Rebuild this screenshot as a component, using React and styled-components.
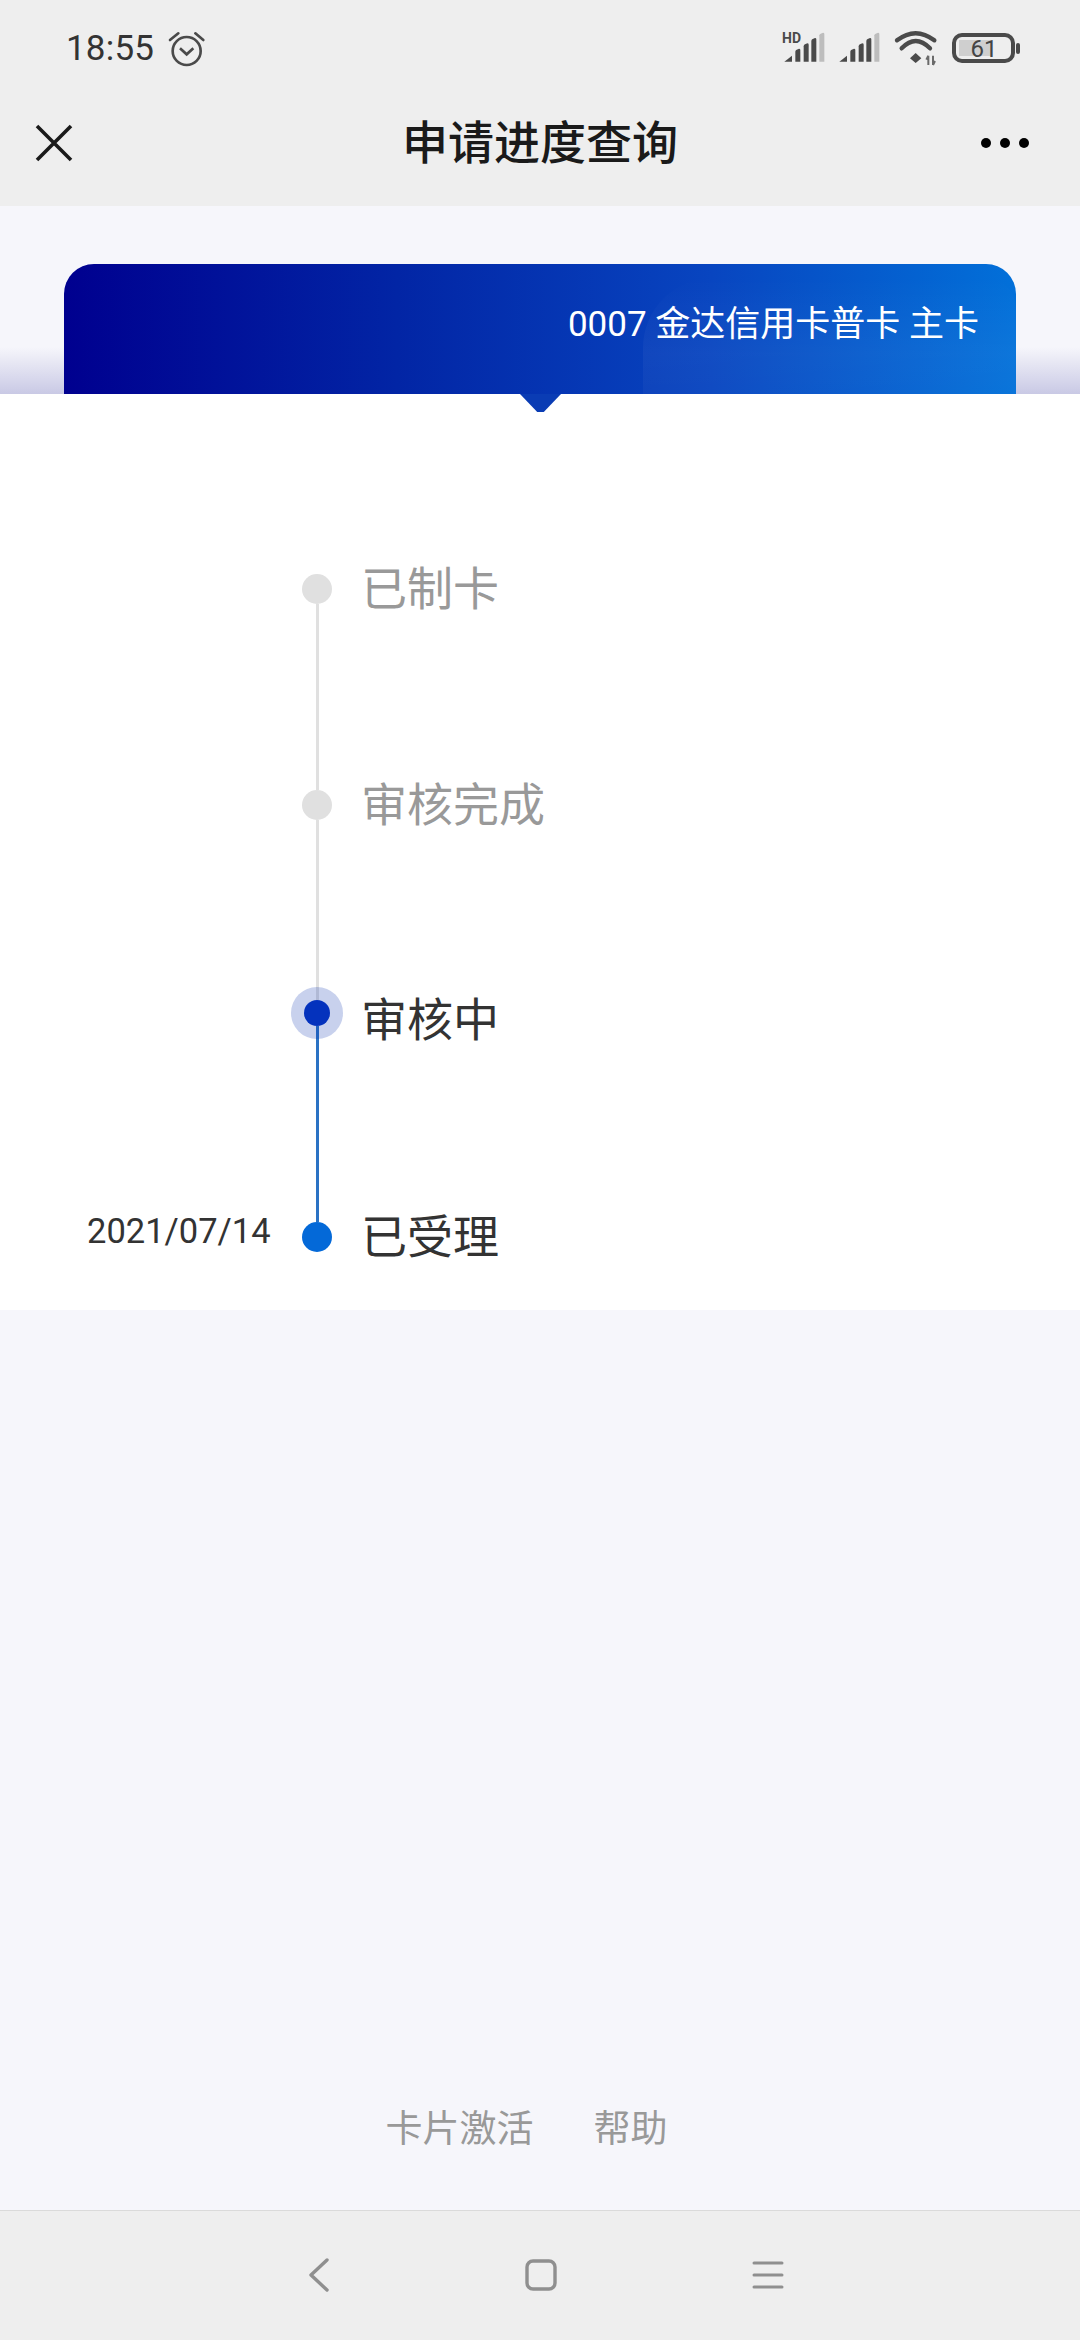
import React from 'react';
import styled, { createGlobalStyle } from 'styled-components';

const Global = createGlobalStyle`
  html, body { margin: 0; padding: 0; background: #f6f6fb; }
  * { box-sizing: border-box; }
  body { font-family: "Roboto", "Noto Sans CJK SC", sans-serif; }
`;

const cjk = `"Roboto", "Noto Sans CJK SC", sans-serif`;

const Page = styled.div`
  width: 1080px; height: 2340px; display: flex; flex-direction: column; background: #f6f6fb; overflow: hidden;
`;
const Header = styled.header`
  height: 206px; background: #eeeeee; display: flex; flex-direction: column; flex: none;
`;
const StatusBar = styled.div`
  height: 94px; padding: 2px 60px 0 66px; display: flex; align-items: center; justify-content: space-between;
`;
const StatusLeft = styled.div`display: flex; align-items: center; gap: 14px;`;
const Clock = styled.span`font: 400 35px/1 ${cjk}; color: #333; letter-spacing: 0.2px;`;
const StatusIcons = styled.div`display: flex; align-items: center; gap: 14px;`;
const Svg = styled.svg`display: block; flex: none; overflow: visible;`;
const NavBar = styled.div`
  flex: 1; padding: 0 51px 14px 36px; display: flex; align-items: center; justify-content: space-between; position: relative;
`;
const Title = styled.h1`
  position: absolute; left: 0; right: 0; margin: 0; text-align: center; font: 500 46px/1 ${cjk}; color: #1a1a1a;
`;
const Hero = styled.section`
  height: 188px; flex: none; padding: 58px 64px 0;
  background: linear-gradient(to bottom, transparent 0 75%, #c9c9e5 100%);
`;
const Card = styled.div`
  position: relative; height: 130px; border-radius: 30px 30px 0 0; padding: 43px 37px 0 0; text-align: right;
  background: linear-gradient(90deg, #00008f 0%, #0225a5 35%, #0845c0 68%, #0270d9 100%);
  color: #fff; font: 400 35px/1 ${cjk};
  &::after {
    content: ""; position: absolute; left: 456px; bottom: -18px; width: 41px; height: 18px;
    background: #0a3cb4; clip-path: polygon(0 0, 100% 0, 58% 100%, 42% 100%);
  }
`;
const CardGlow = styled.div`
  position: absolute; left: 579px; right: 0; bottom: 0; top: 14px; border-radius: 70px 30px 0 0;
  background: linear-gradient(to bottom, rgba(255,255,255,0) 0%, rgba(255,255,255,.045) 65%, rgba(255,255,255,.03) 100%);
`;
const CardLabel = styled.span`position: relative; z-index: 1;`;
const Panel = styled.section`
  background: #fff; height: 916px; flex: none; padding: 180px 0 0 87px;
`;
const Step = styled.div`
  display: grid; grid-template-columns: 215px 30px 1fr; height: ${p => p.$h}px;
`;
const DateCell = styled.div`
  font: 400 34.5px/40px ${cjk}; color: #333; margin-top: -11px; white-space: nowrap;
`;
const Rail = styled.div`display: flex; flex-direction: column; align-items: center;`;
const Dot = styled.div`
  flex: none; border-radius: 50%; width: ${p => p.$active ? 26 : 30}px; height: ${p => p.$active ? 26 : 30}px;
  background: ${p => p.$color};
  position: relative; z-index: 1;
  box-shadow: ${p => p.$active ? '0 0 0 13px rgba(3,45,175,.22)' : 'none'};
`;
const Line = styled.div`flex: 1; width: 3px; background: ${p => p.$color};`;
const Label = styled.div`
  margin-left: 29px; font: 400 46px/50px ${cjk}; color: ${p => p.$muted ? '#999' : '#333'};
  margin-top: ${p => p.$top}px;
`;
const Spacer = styled.div`flex: 1;`;
const FooterLinks = styled.div`
  height: 102px; flex: none; display: flex; justify-content: center; gap: 60px; align-items: flex-start;
  padding-right: 27px; color: #999; font: 400 37px/44px ${cjk};
`;
const SystemBar = styled.footer`
  height: 130px; flex: none; background: #eeeeee; border-top: 1px solid #dadada;
  display: flex; align-items: center; justify-content: center; gap: 196px; padding: 0 0 1px 12px;
`;

const Signal = ({ hd }) => (
  <Svg width="41" height="32" viewBox="0 0 123 96">
    {hd && <text x="-3" y="32" fontFamily="Roboto, sans-serif" fontWeight="700" fontSize="42" fill="#4a4a4a">HD</text>}
    <path d="M4 89 L27 71 V89 Z" fill="#4a4a4a" />
    <path d="M37 89 V59 Q37 55 41 53 L48 50 Q52 50 52 54 V89 Z" fill="#4a4a4a" />
    <path d="M62 89 V43 Q62 39 66 37 L73 34 Q77 34 77 38 V89 Z" fill="#4a4a4a" />
    <path d="M85 89 V27 Q85 23 89 21 L96 18 Q100 18 100 22 V89 Z" fill="#4a4a4a" />
    <path d="M109 89 V10 Q109 7 113 5 L120 2 Q124 2 124 6 V89 Z" fill="#bdbdbd" />
  </Svg>
);

export default function App() {
  return (
    <Page>
      <Global />
      <Header>
        <StatusBar>
          <StatusLeft>
            <Clock>18:55</Clock>
            <Svg width="37" height="35" viewBox="0 0 111 105">
              <circle cx="56" cy="60" r="42" fill="none" stroke="#4a4a4a" strokeWidth="8" />
              <path d="M36 52 L56 70 L76 52" fill="none" stroke="#4a4a4a" strokeWidth="8" />
              <path d="M6 27 L31 7 M82 7 L106 27" fill="none" stroke="#4a4a4a" strokeWidth="8" strokeLinecap="round" />
            </Svg>
          </StatusLeft>
          <StatusIcons>
            <Signal hd />
            <Signal />
            <Svg width="43" height="34" viewBox="0 0 129 102" style={{ marginLeft: 2 }}>
              <path d="M6 28 Q62 -15 118 28" fill="none" stroke="#4a4a4a" strokeWidth="13" strokeLinecap="round" />
              <path d="M20 52 Q62 8 105 52" fill="none" stroke="#4a4a4a" strokeWidth="13" strokeLinecap="round" />
              <path d="M45 82 L62 66 L79 82 L62 96 Z" fill="#4a4a4a" />
              <path d="M100 74 V102 M100 74 L94 86 M114 102 V74 M114 102 L120 90" fill="none" stroke="#6a6a6a" strokeWidth="6" />
            </Svg>
            <Svg width="68" height="30" viewBox="0 0 68 30">
              <rect x="2" y="2" width="59" height="26" rx="8" fill="none" stroke="#4a4a4a" strokeWidth="4" />
              <rect x="7" y="7" width="32" height="16" fill="#cfcfcf" />
              <rect x="64" y="10" width="4" height="11" rx="2" fill="#4a4a4a" />
              <text x="32" y="24" textAnchor="middle" fontFamily="Roboto, sans-serif" fontSize="24" fill="#444">61</text>
            </Svg>
          </StatusIcons>
        </StatusBar>
        <NavBar>
          <Title>申请进度查询</Title>
          <Svg width="36" height="36" viewBox="0 0 36 36">
            <path d="M1 1 L35 35 M35 1 L1 35" stroke="#1a1a1a" strokeWidth="3.6" fill="none" />
          </Svg>
          <Svg width="48" height="10" viewBox="0 0 48 10">
            <circle cx="5" cy="5" r="5" fill="#000" />
            <circle cx="24" cy="5" r="5" fill="#000" />
            <circle cx="43" cy="5" r="5" fill="#000" />
          </Svg>
        </NavBar>
      </Header>
      <Hero>
        <Card>
          <CardGlow />
          <CardLabel>0007 金达信用卡普卡 主卡</CardLabel>
        </Card>
      </Hero>
      <Panel>
        <Step $h={216}>
          <div />
          <Rail><Dot $color="#e0e0e0" /><Line $color="#e0e0e0" /></Rail>
          <Label $muted $top={-10}>已制卡</Label>
        </Step>
        <Step $h={210}>
          <div />
          <Rail><Dot $color="#e0e0e0" /><Line $color="#e0e0e0" /></Rail>
          <Label $muted $top={-10}>审核完成</Label>
        </Step>
        <Step $h={222}>
          <div />
          <Rail><Dot $active $color="#0432bd" /><Line $color="#2a72c4" /></Rail>
          <Label $top={-5}>审核中</Label>
        </Step>
        <Step $h={30}>
          <DateCell>2021/07/14</DateCell>
          <Rail><Dot $color="#0469d8" /></Rail>
          <Label $top={-10}>已受理</Label>
        </Step>
      </Panel>
      <Spacer />
      <FooterLinks>
        <span>卡片激活</span>
        <span>帮助</span>
      </FooterLinks>
      <SystemBar>
        <Svg width="20" height="34" viewBox="0 0 20 34">
          <path d="M18 2 L2 17 L18 32" fill="none" stroke="#8f8f8f" strokeWidth="3.4" strokeLinecap="round" strokeLinejoin="round" />
        </Svg>
        <Svg width="32" height="32" viewBox="0 0 32 32">
          <rect x="2" y="2" width="28" height="28" rx="6" fill="none" stroke="#8f8f8f" strokeWidth="3.4" />
        </Svg>
        <Svg width="30" height="28" viewBox="0 0 30 28">
          <path d="M1 2 H29 M1 14 H29 M1 26 H29" fill="none" stroke="#8f8f8f" strokeWidth="3" strokeLinecap="round" />
        </Svg>
      </SystemBar>
    </Page>
  );
}
